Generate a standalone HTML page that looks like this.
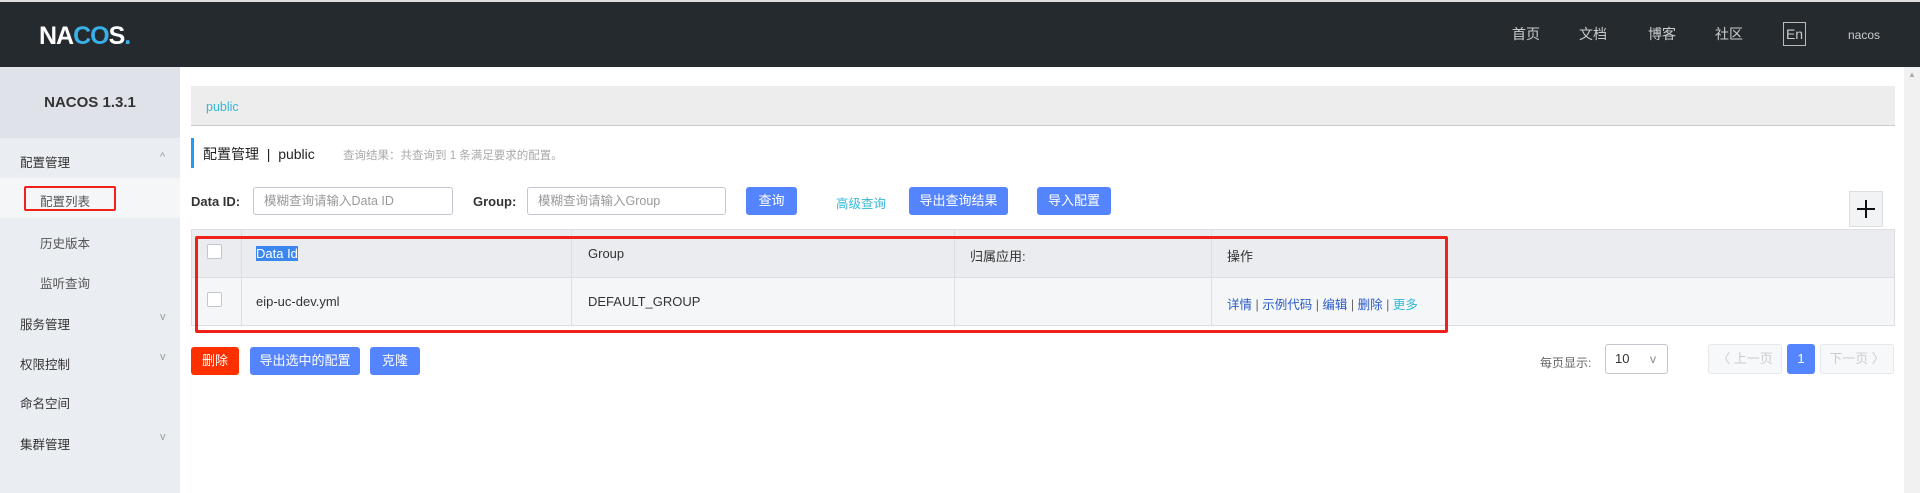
<!DOCTYPE html>
<html><head><meta charset="utf-8"><style>
*{box-sizing:border-box;margin:0;padding:0}
body{width:1920px;height:493px;overflow:hidden;background:#fff;font-family:"Liberation Sans","Noto Sans CJK SC",sans-serif;font-size:14px;color:#333;position:relative}
.a{position:absolute}
.hdr{left:0;top:0;width:1920px;height:67px;background:#252a2f;border-top:2px solid #ddd}
.nav{color:#ccc;font-size:14px;top:24px}
.side{left:0;top:67px;width:180px;height:426px;background:#eaedf1}
.ver{left:0;top:67px;width:180px;height:71px;background:#dfe2e8;text-align:center;line-height:71px;font-weight:bold;font-size:15px;color:#333}
.mi{left:20px;font-size:12.5px;color:#333}
.sub{left:40px;font-size:12.5px;color:#555}
.car{left:160px;color:#999;font-size:11px}
.btn{background:#5584ff;color:#fff;border-radius:3px;text-align:center;line-height:28px;height:28px;font-size:13px}
.inp{border:1px solid #c4c6cf;border-radius:3px;height:28px;line-height:26px;padding-left:10px;color:#999;font-size:12.5px;background:#fff}
.lbl{font-size:13px;color:#333;top:194px}
.cell{font-size:13px;color:#333}
.sep{background:#dcdee3;width:1px}
</style></head><body>
<div class="a hdr"></div>
<div class="a" style="left:39px;top:22px;color:#fff;font-size:25px;font-weight:bold;letter-spacing:-1px;font-family:'Liberation Sans',sans-serif">NA<span style="color:#3ab0e8">CO</span>S<span style="color:#3ab0e8">.</span></div>
<div class="a nav" style="left:1512px">首页</div>
<div class="a nav" style="left:1579px">文档</div>
<div class="a nav" style="left:1648px">博客</div>
<div class="a nav" style="left:1715px">社区</div>
<div class="a" style="left:1783px;top:22px;width:23px;height:24px;border:1px solid #bbb;color:#ccc;font-size:14px;text-align:center;line-height:22px">En</div>
<div class="a" style="left:1848px;top:28px;color:#ccc;font-size:12px">nacos</div>

<div class="a side"></div>
<div class="a ver">NACOS 1.3.1</div>
<div class="a mi" style="top:152px">配置管理</div><div class="a car" style="top:151px">^</div>
<div class="a" style="left:0;top:178px;width:180px;height:40px;background:#f5f6f8"></div>
<div class="a sub" style="top:191px">配置列表</div>
<div class="a" style="left:24px;top:186px;width:92px;height:25px;border:2px solid #f0201a;border-radius:2px"></div>
<div class="a sub" style="top:233px">历史版本</div>
<div class="a sub" style="top:273px">监听查询</div>
<div class="a mi" style="top:314px">服务管理</div><div class="a car" style="top:311px">v</div>
<div class="a mi" style="top:354px">权限控制</div><div class="a car" style="top:351px">v</div>
<div class="a mi" style="top:393px">命名空间</div>
<div class="a mi" style="top:434px">集群管理</div><div class="a car" style="top:431px">v</div>

<div class="a" style="left:191px;top:86px;width:1704px;height:40px;background:#ededed;border-bottom:1px solid #ccc"></div>
<div class="a" style="left:206px;top:100px;color:#33b8d8;font-size:12.5px">public</div>
<div class="a" style="left:191px;top:138px;width:3px;height:30px;background:#209bfa"></div>
<div class="a" style="left:203px;top:144px;font-size:14px;color:#222">配置管理 &nbsp;|&nbsp; public</div>
<div class="a" style="left:343px;top:147px;font-size:11.5px;color:#aaa">查询结果：共查询到 1 条满足要求的配置。</div>

<div class="a lbl" style="left:191px;font-weight:bold">Data ID:</div>
<div class="a inp" style="left:253px;top:187px;width:200px">模糊查询请输入Data ID</div>
<div class="a lbl" style="left:473px;font-weight:bold">Group:</div>
<div class="a inp" style="left:527px;top:187px;width:199px">模糊查询请输入Group</div>
<div class="a btn" style="left:746px;top:187px;width:51px">查询</div>
<div class="a" style="left:836px;top:193px;color:#33b8d8;font-size:12.5px">高级查询</div>
<div class="a btn" style="left:909px;top:187px;width:99px">导出查询结果</div>
<div class="a btn" style="left:1037px;top:187px;width:74px">导入配置</div>
<div class="a" style="left:1849px;top:191px;width:34px;height:36px;background:#f2f3f5;border:1px solid #ddd"></div>
<div class="a" style="left:1857px;top:208px;width:18px;height:2px;background:#111"></div>
<div class="a" style="left:1865px;top:200px;width:2px;height:18px;background:#111"></div>

<div class="a" style="left:191px;top:229px;width:1704px;height:49px;background:#ebecf0;border:1px solid #dcdee3"></div>
<div class="a" style="left:191px;top:277px;width:1704px;height:49px;background:#f5f6f8;border:1px solid #dcdee3"></div>
<div class="a sep" style="left:241px;top:229px;height:97px"></div>
<div class="a sep" style="left:571px;top:229px;height:97px"></div>
<div class="a sep" style="left:954px;top:229px;height:97px"></div>
<div class="a sep" style="left:1211px;top:229px;height:97px"></div>
<div class="a" style="left:207px;top:244px;width:15px;height:15px;background:#fff;border:1px solid #c4c6cf;border-radius:2px"></div>
<div class="a" style="left:207px;top:292px;width:15px;height:15px;background:#fff;border:1px solid #c4c6cf;border-radius:2px"></div>
<div class="a cell" style="left:256px;top:246px;background:#3a87f0;color:#fff">Data Id</div>
<div class="a cell" style="left:588px;top:246px">Group</div>
<div class="a cell" style="left:970px;top:246px">归属应用:</div>
<div class="a cell" style="left:1227px;top:246px">操作</div>
<div class="a cell" style="left:256px;top:294px">eip-uc-dev.yml</div>
<div class="a cell" style="left:588px;top:294px">DEFAULT_GROUP</div>
<div class="a cell" style="left:1227px;top:294px;color:#2a5cc8;font-size:12.5px">详情 <span style="color:#666">|</span> 示例代码 <span style="color:#666">|</span> 编辑 <span style="color:#666">|</span> 删除 <span style="color:#666">|</span> <span style="color:#33b8d8">更多</span></div>
<div class="a" style="left:195px;top:236px;width:1253px;height:97px;border:3px solid #f0201a;border-radius:2px"></div>

<div class="a btn" style="left:191px;top:347px;width:48px;background:#ff3000">删除</div>
<div class="a btn" style="left:250px;top:347px;width:110px">导出选中的配置</div>
<div class="a btn" style="left:370px;top:347px;width:50px">克隆</div>

<div class="a" style="left:1540px;top:354px;font-size:12px;color:#666">每页显示:</div>
<div class="a" style="left:1605px;top:344px;width:63px;height:30px;border:1px solid #c4c6cf;border-radius:3px;font-size:13px;line-height:28px;padding-left:9px">10<span style="position:absolute;left:44px;color:#888;font-size:12px">v</span></div>
<div class="a" style="left:1708px;top:344px;width:74px;height:30px;border:1px solid #e6e7eb;background:#f7f8fa;border-radius:3px;color:#ccc;font-size:13px;line-height:28px;text-align:center">〈 上一页</div>
<div class="a btn" style="left:1787px;top:344px;width:28px;height:30px;line-height:30px">1</div>
<div class="a" style="left:1820px;top:344px;width:74px;height:30px;border:1px solid #e6e7eb;background:#f7f8fa;border-radius:3px;color:#ccc;font-size:13px;line-height:28px;text-align:center">下一页 〉</div>

<div class="a" style="left:1904px;top:67px;width:16px;height:426px;background:#f1f1f1"></div>
<div class="a" style="left:1908px;top:70px;color:#aaa;font-size:8px">▲</div>
</body></html>
